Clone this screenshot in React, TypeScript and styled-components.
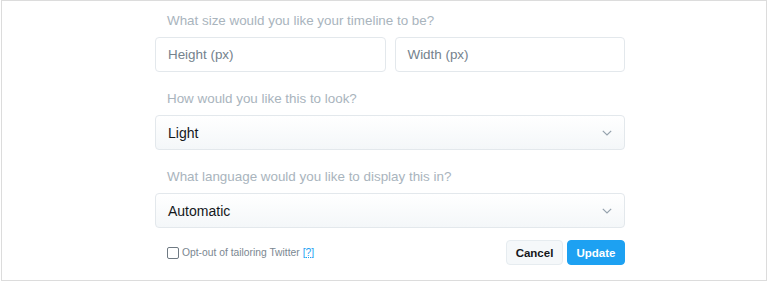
import React from "react";
import styled, { createGlobalStyle } from "styled-components";

const GlobalStyle = createGlobalStyle`
  html, body { margin: 0; padding: 0; background: #ffffff; }
  body { font-family: "Liberation Sans", Arial, sans-serif; }
  * { box-sizing: border-box; }
`;

const Frame = styled.div`
  margin-left: 1px;
  width: 766px;
  height: 281px;
  border: 1px solid #dcdcdc;
  padding: 9px 0 0 153px;
`;

const Form = styled.div`
  width: 470px;
  display: flex;
  flex-direction: column;
  gap: 16px;
`;

const Field = styled.div`
  display: flex;
  flex-direction: column;
  gap: 7px;
`;

const Label = styled.div`
  height: 20px;
  line-height: 22px;
  padding-left: 12px;
  font-size: 13.4px;
  color: #a9b4bd;
`;

const Row = styled.div`
  display: flex;
  gap: 9px;
`;

const TextInput = styled.div`
  flex: 1;
  height: 35px;
  border: 1px solid #e3e8ec;
  border-radius: 4px;
  background: #ffffff;
  padding: 0 12px;
  display: flex;
  align-items: center;
  font-size: 13.4px;
  color: #74828d;
`;

const Select = styled.div`
  height: 35px;
  border: 1px solid #e3e8ec;
  border-radius: 4px;
  background: linear-gradient(#ffffff, #f4f7f9);
  padding: 0 12px;
  display: flex;
  align-items: center;
  justify-content: space-between;
  font-size: 14px;
  color: #14171a;
`;

const Chevron = styled.svg`
  width: 10px;
  height: 6px;
`;

const Footer = styled.div`
  margin-top: -4px;
  display: flex;
  align-items: center;
  justify-content: space-between;
`;

const OptOut = styled.label`
  display: flex;
  align-items: center;
  gap: 3px;
  padding-left: 12px;
  font-size: 10.3px;
  color: #7b8791;
`;

const Check = styled.span`
  width: 12px;
  height: 12px;
  border: 1px solid #6f7a83;
  border-radius: 2px;
  background: #fff;
`;

const Help = styled.span`
  color: #1da1f2;
  text-decoration: underline dotted;
`;

const Buttons = styled.div`
  display: flex;
  gap: 4px;
`;

const Button = styled.button<{ $primary?: boolean }>`
  width: ${(p) => (p.$primary ? "58px" : "57px")};
  height: 25px;
  padding: 0;
  border-radius: 4px;
  border: 1px solid ${(p) => (p.$primary ? "#1da1f2" : "#e6ecf0")};
  background: ${(p) => (p.$primary ? "#1da1f2" : "#f5f8fa")};
  color: ${(p) => (p.$primary ? "#ffffff" : "#14171a")};
  font-family: "Liberation Sans", Arial, sans-serif;
  font-weight: bold;
  font-size: 11.5px;
`;

const ChevronIcon = () => (
  <Chevron viewBox="0 0 10 6">
    <path d="M0.8 0.8 L5 5 L9.2 0.8" fill="none" stroke="#95a2ad" strokeWidth="1.2" />
  </Chevron>
);

export default function App() {
  return (
    <>
      <GlobalStyle />
      <Frame>
        <Form>
          <Field>
            <Label>What size would you like your timeline to be?</Label>
            <Row>
              <TextInput>Height (px)</TextInput>
              <TextInput>Width (px)</TextInput>
            </Row>
          </Field>
          <Field>
            <Label>How would you like this to look?</Label>
            <Select>
              Light
              <ChevronIcon />
            </Select>
          </Field>
          <Field>
            <Label>What language would you like to display this in?</Label>
            <Select>
              Automatic
              <ChevronIcon />
            </Select>
          </Field>
          <Footer>
            <OptOut>
              <Check />
              Opt-out of tailoring Twitter
              <Help>[?]</Help>
            </OptOut>
            <Buttons>
              <Button>Cancel</Button>
              <Button $primary>Update</Button>
            </Buttons>
          </Footer>
        </Form>
      </Frame>
    </>
  );
}
